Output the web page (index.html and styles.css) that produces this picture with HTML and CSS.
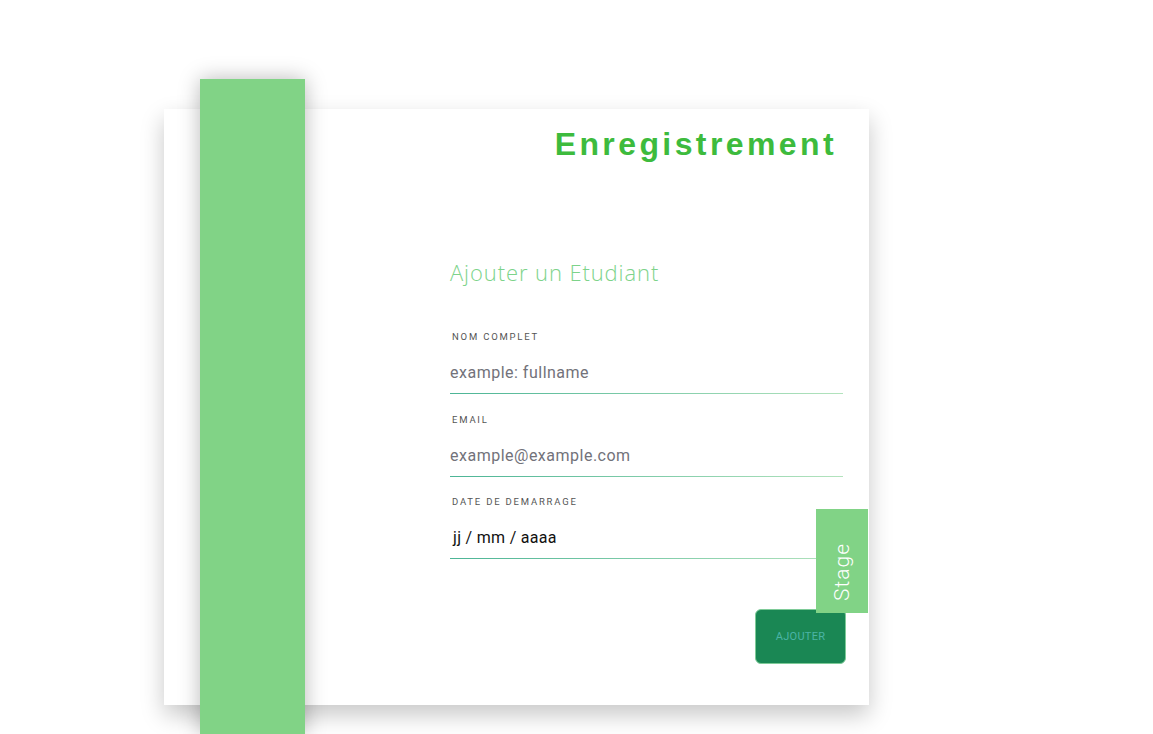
FILE: index.html
```html
<!DOCTYPE html>
<html lang="fr">
<head>
<meta charset="utf-8">
<title>Enregistrement</title>
<link rel="stylesheet" href="styles.css">
</head>
<body>
<div class="page">
  <div class="card">
    <div class="side-bar"></div>
    <h1 class="title">Enregistrement</h1>
    <form class="form">
      <h2 class="form-title">Ajouter un Etudiant</h2>
      <div class="field">
        <label class="label">NOM COMPLET</label>
        <div class="input placeholder">example: fullname</div>
        <div class="line"></div>
      </div>
      <div class="field">
        <label class="label">EMAIL</label>
        <div class="input placeholder">example@example.com</div>
        <div class="line"></div>
      </div>
      <div class="field">
        <label class="label">DATE DE DEMARRAGE</label>
        <div class="input date">jj / mm / aaaa</div>
        <div class="line"></div>
      </div>
      <div class="actions">
        <button type="button" class="btn">AJOUTER</button>
      </div>
    </form>
    <div class="tab"><span class="tab-text">Stage</span></div>
  </div>
</div>
</body>
</html>
```
FILE: styles.css
```css
html, body {
  margin: 0;
  height: 100%;
  overflow: hidden;
  background: #ffffff;
}
.page {
  padding: 109px 0 0 164px;
}
.card {
  position: relative;
  width: 705px;
  height: 596px;
  box-sizing: border-box;
  background: #ffffff;
  box-shadow: 0 10px 22px rgba(0, 0, 0, 0.22);
  padding: 17px 26px 0 286px;
  display: flex;
  flex-direction: column;
}
.side-bar {
  position: absolute;
  left: 36px;
  top: -30px;
  width: 105px;
  height: 655px;
  background: #81d386;
  box-shadow: 0 0 20px rgba(0, 0, 0, 0.28);
}
.title {
  margin: 0 6px 0 0;
  font-family: "Liberation Sans", Arial, sans-serif;
  font-weight: 700;
  font-size: 32px;
  line-height: 36px;
  letter-spacing: 3.4px;
  color: #3dbb3d;
  text-align: right;
}
.form {
  display: flex;
  flex-direction: column;
}
.form-title {
  margin: 96px 0 45px;
  font-family: "Open Sans", sans-serif;
  font-weight: 300;
  font-size: 22px;
  line-height: 28px;
  letter-spacing: 0.9px;
  color: #7dd38a;
}
.field {
  display: flex;
  flex-direction: column;
  margin-bottom: 19.5px;
}
.label {
  font-family: Roboto, "Liberation Sans", sans-serif;
  font-size: 9.5px;
  line-height: 12px;
  letter-spacing: 1.8px;
  color: #555555;
  padding-left: 2px;
}
.input {
  margin-top: 20px;
  padding-bottom: 10px;
  font-family: Roboto, "Liberation Sans", sans-serif;
  font-size: 16px;
  line-height: 20px;
  letter-spacing: 0.5px;
}
.placeholder {
  color: #72727a;
}
.date {
  color: #111111;
  padding-left: 3px;
  letter-spacing: 0.3px;
}
.line {
  height: 1px;
  background: linear-gradient(to right, #4cb596, #b3e3bd);
}
.actions {
  display: flex;
  justify-content: flex-end;
  margin-top: 30px;
  margin-right: -3px;
}
.btn {
  width: 91px;
  height: 55px;
  border: 1px solid #7ecb98;
  border-radius: 6px;
  background: #1a8754;
  color: #4bb4a6;
  font-family: Roboto, "Liberation Sans", sans-serif;
  font-size: 11px;
  letter-spacing: 0.3px;
  padding: 0;
}
.tab {
  position: absolute;
  left: 652px;
  top: 400px;
  width: 52px;
  height: 104px;
  box-sizing: border-box;
  padding-bottom: 12px;
  background: #81d386;
  display: flex;
  align-items: flex-end;
  justify-content: center;
}
.tab-text {
  writing-mode: vertical-rl;
  transform: rotate(180deg);
  font-family: Roboto, "Liberation Sans", sans-serif;
  font-weight: 300;
  font-size: 21px;
  line-height: 24px;
  color: #ffffff;
  letter-spacing: 1px;
}
```
